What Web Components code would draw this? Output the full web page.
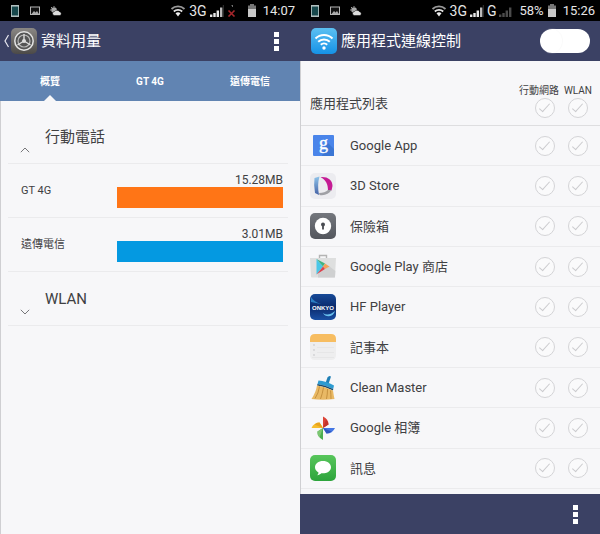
<!DOCTYPE html>
<html lang="zh-Hant">
<head>
<meta charset="utf-8">
<meta name="viewport" content="width=device-width, initial-scale=1">
<title>資料用量</title>
<style>
    body {
        margin: 0;
        min-height: 100vh;
        display: grid;
        grid-template-columns: 1fr 1fr;
        background: #f7f7f9;
        color: #404042;
        font-family: Roboto, "Noto Sans CJK TC", sans-serif;
        font-size: 13px;
        line-height: 20px;
    }
</style>
</head>
<body>
    <phone-screen>
        <status-bar slot="status">
            <sys-icon name="wifi"></sys-icon>
            <span>3G</span>
            <sys-icon name="signal"></sys-icon>
            <sys-icon name="nosim"></sys-icon>
            <sys-icon slot="power" name="battery"></sys-icon>
            <time slot="time">14:07</time>
        </status-bar>
        <title-bar slot="title" back menu>
            <app-icon slot="icon" name="settings"></app-icon>
            資料用量
        </title-bar>
        <tab-strip labels="概覽,GT 4G,遠傳電信"></tab-strip>
        <usage-group label="行動電話" opened>
            <usage-row label="GT 4G" value="15.28MB" style="--bar: #ff7516"></usage-row>
            <usage-row label="遠傳電信" value="3.01MB" style="--bar: #0499e1"></usage-row>
        </usage-group>
        <usage-group label="WLAN"></usage-group>
    </phone-screen>

    <phone-screen>
        <status-bar slot="status">
            <sys-icon name="wifi"></sys-icon>
            <span>3G</span>
            <sys-icon name="signal"></sys-icon>
            <span>G</span>
            <sys-icon name="weak"></sys-icon>
            <span slot="power">58%</span>
            <sys-icon slot="power" name="battery"></sys-icon>
            <time slot="time">15:26</time>
        </status-bar>
        <title-bar slot="title">
            <app-icon slot="icon" name="wlan"></app-icon>
            應用程式連線控制
            <toggle-switch slot="action" label="應用程式連線控制"></toggle-switch>
        </title-bar>
        <app-list></app-list>
        <bottom-bar slot="footer"></bottom-bar>
    </phone-screen>

<script>
    // Small monochrome glyphs for the status bar: [width, height, markup]
    const SYS_ICONS = {
        phone: [10, 14, '<rect x="1.5" y="1.5" width="7" height="11" fill="#17484c" stroke="#9fb3b3"/><path d="M1 2h8M1 12h8" stroke="#c4cccc"/>'],
        picture: [10, 10, '<rect x=".5" y="1" width="9" height="7.5" fill="#111" stroke="#b5b5b5"/><path d="M1.5 8l2.5-3 1.5 1.5L7 5l2 3z" fill="#aaa"/>'],
        weather: [12, 10, '<circle cx="4" cy="4" r="2.8" fill="#a8a8a8"/><path d="M1 1l1 1M4 0v1M0 4h1" stroke="#999"/><path d="M4.500 9.500a2 2 0 0 1 0-4 3 3 0 0 1 5 .2 2 2 0 0 1 .6 3.800z" fill="#ddd" stroke="#000" stroke-width=".5"/>'],
        wifi: [16, 12, '<g fill="none" stroke="#e2e2e2" stroke-width="1.800"><path d="M1.500 4a9.500 9.500 0 0 1 13 0" stroke="#999"/><path d="M3.800 6.500a6.200 6.200 0 0 1 8.400 0"/></g><path d="M5.500 8.300a4 4 0 0 1 5 0L8 11.500z" fill="#eee"/>'],
        signal: [14, 12, '<path d="M0 12v-2.500h2.400V12zM3.300 12V8h2.400v4zM6.600 12V5.500H9V12z" fill="#e8e8e8"/><path d="M10 12V2.500h2.400V12z" fill="#bbb"/><path d="M13.300 0v12" stroke="#444" stroke-width=".8"/>'],
        weak: [14, 12, '<path d="M0 12v-2.500h2.400V12zM3.300 12V8h2.400v4zM6.600 12V5.500H9V12zM10 12V2.500h2.400V12z" fill="#4b4b4b"/>'],
        nosim: [14, 12, '<path d="M1.500 5.500l6 6M7.500 5.500l-6 6" stroke="#a5262b" stroke-width="1.600"/><path d="M4 0h1.500v2" fill="none" stroke="#888" stroke-width=".8"/>'],
        battery: [10, 13, '<path d="M3 0h4v1.500h2V13H1V1.500h2z" fill="#777"/><path d="M1 5h8v8H1z" fill="#c9c9c9"/>'],
    };

    // Launcher icons, all drawn in a 26 x 26 box
    const APP_ICONS = {
        settings: `
            <defs><linearGradient id="g" x2="0" y2="1"><stop stop-color="#8a8784"/><stop offset="1" stop-color="#4c4a48"/></linearGradient></defs>
            <rect width="26" height="26" rx="5" fill="url(#g)"/>
            <circle cx="13" cy="13" r="9.200" fill="#555" stroke="#e4e4e4" stroke-width="1.500"/>
            <circle cx="13" cy="13" r="6" fill="none" stroke="#b8b8b8" stroke-width="1.200"/>
            <circle cx="13" cy="13" r="2" fill="#ddd"/>
            <path d="M13 13V6M13 13l-6.500 4M13 13l6.500 4" stroke="#ddd" stroke-width="1.400"/>`,
        wlan: `
            <defs><linearGradient id="g" x2="0" y2="1"><stop stop-color="#5cc0f2"/><stop offset="1" stop-color="#1592e6"/></linearGradient></defs>
            <rect width="26" height="26" rx="5" fill="url(#g)"/>
            <g fill="none" stroke="#fff" stroke-width="2"><path d="M4.500 10.500a12 12 0 0 1 17 0"/><path d="M7.200 13.800a8.200 8.200 0 0 1 11.600 0"/><path d="M9.800 16.800a4.600 4.600 0 0 1 6.400 0"/></g>
            <circle cx="13" cy="20" r="1.700" fill="#fff"/>`,
        google: `
            <rect x="3" y="2" width="21" height="21" rx="1" fill="#4a85ea"/>
            <path d="M17 9l7 7v7H12z" fill="#3b76d4"/>
            <text x="13.500" y="16" text-anchor="middle" font-family="Liberation Serif, serif" font-size="18" fill="#fff" stroke="#fff" stroke-width=".4">g</text>`,
        store: `
            <defs><linearGradient id="g" x2="0" y2="1"><stop stop-color="#8fc4ea"/><stop offset="1" stop-color="#4461a5"/></linearGradient></defs>
            <rect width="26" height="26" rx="5" fill="#ececf0"/>
            <path d="M4.500 5l5-1.500Q7 12 9 22l-4-2Q3.500 12 4.500 5z" fill="url(#g)"/>
            <path d="M10.500 4C18 3.500 22.500 7 22.500 13l-1 4.500h-3.500C18 11 16 7 10.500 4z" fill="#c51b94"/>
            <path d="M9 20c4 0 7-1 9-3h3.500C19 21 15 22.800 9.500 22z" fill="#9fa0a5"/>`,
        safe: `
            <defs><linearGradient id="g" x2="0" y2="1"><stop stop-color="#74777d"/><stop offset="1" stop-color="#53565d"/></linearGradient></defs>
            <rect width="26" height="26" rx="5" fill="url(#g)"/>
            <circle cx="13" cy="13" r="8.200" fill="#fff"/>
            <circle cx="13" cy="11.500" r="2" fill="#4a4c52"/><path d="M13 12v4.500" stroke="#4a4c52" stroke-width="1.800"/>`,
        play: `
            <path d="M9.500 4V1.500h7V4" fill="none" stroke="#b4b4b4" stroke-width="1.400"/>
            <path d="M0 4h26l-1 18.500q0 1-1 1H2q-1 0-1-1z" fill="#dedfdf"/><path d="M8 20L19 12l6.400 5-.4 6.500H8z" fill="#cfd0d1"/>
            <path d="M6.500 5v15.500l6.500-8z" fill="#49c7e8"/>
            <path d="M6.500 5l8.500 4.500-2 3z" fill="#41b383"/><path d="M15 9.500l4.500 3-4.500 2.500-2-2.500z" fill="#f2a25c"/>
            <path d="M6.500 20.500l6.500-8 2 2.500z" fill="#d9434f"/>`,
        onkyo: `
            <defs><linearGradient id="g" x2="0" y2="1"><stop stop-color="#174a98"/><stop offset=".5" stop-color="#0b2a6c"/><stop offset="1" stop-color="#1a50a4"/></linearGradient></defs>
            <rect width="26" height="26" rx="5" fill="url(#g)"/>
            <path d="M1 3Q4 8 11 10L1 8z" fill="#2b7fc4"/>
            <path d="M13 19q5 4 12-2-1.500 5-6 5.200Q15 22.500 13 19z" fill="#69c1ee"/>
            <text x="13" y="15.500" text-anchor="middle" font-family="Liberation Sans, sans-serif" font-weight="bold" font-size="6" fill="#fff">ONKYO</text>`,
        notes: `
            <path d="M0 7h26v14q0 5-5 5H5q-5 0-5-5z" fill="#eeeeef"/>
            <path d="M5 0h16q5 0 5 5v3H0V5q0-5 5-5z" fill="#f7bd61"/>
            <path d="M7 13.500h17M7 18.500h17M2 23.500h22" stroke="#e2e2e4" stroke-width=".7"/>
            <g fill="#cfd0d3"><circle cx="4" cy="11" r=".9"/><circle cx="4" cy="16" r=".9"/><circle cx="4" cy="21" r=".9"/></g>`,
        broom: `
            <path d="M15.500 8l2-5.500q1.500-2.500 3.500-1L18.500 9z" fill="#1f7fb5"/>
            <path d="M8.500 5.500Q16 6 24 10.500l-.8 3.500Q15 10 7.500 9z" fill="#2d9bd1"/><path d="M7.500 9Q15 10 23.200 14l-.2 1.500Q15 11.500 7 10.500z" fill="#184b70"/>
            <path d="M7 10.500q8 .8 16 5 .5 4 1.500 8.500-11.500 1.500-23 0Q6 17 7 10.500z" fill="#e9b965"/>
            <path d="M9.500 11.500q-1 7-4.500 12M13.500 12.500q-1 6-3 11.500M17.500 14q0 5-1 10M20.500 15.500q.5 4 .5 8.500" fill="none" stroke="#bd8735" stroke-width=".8"/>`,
        photos: `
            <path d="M13 13V1.500Q18.500 4 18.500 9.500z" fill="#dc4437"/><path d="M13 13l3-8.500Q18.500 7 18.500 9.500z" fill="#c2342c"/>
            <path d="M13 13h12q-2.500 5.500-8.500 5.500z" fill="#4476e4"/><path d="M13 13l8.500 3.500q-2 2-5 2z" fill="#3158bd"/>
            <path d="M13 13v12Q7 22 7.500 16.500z" fill="#4cae50"/><path d="M13 13l-3.500 9.500Q7 20 7.500 16.500z" fill="#7cc672"/>
            <path d="M13 13H1.500Q4 7.500 9.500 7.500z" fill="#f6bd2c"/><path d="M13 13L4.500 9.500q2-2 5-2z" fill="#e8a31d"/>`,
        messages: `
            <defs><linearGradient id="g" x2="0" y2="1"><stop stop-color="#58c65c"/><stop offset="1" stop-color="#2da43c"/></linearGradient></defs>
            <rect width="26" height="26" rx="5" fill="url(#g)"/>
            <path d="M13 6c-4.500 0-8 2.700-8 6.200 0 2.300 1.500 4.200 3.500 5.200 0 1-.6 2-1.500 2.800 2 0 3.200-.8 4.300-1.900 5.500.4 9.700-2.300 9.700-6.100C21 8.700 17.500 6 13 6z" fill="#fff"/>`,
    };

    const APPS = [
        ['google', 'Google App'],
        ['store', '3D Store'],
        ['safe', '保險箱'],
        ['play', 'Google Play 商店'],
        ['onkyo', 'HF Player'],
        ['notes', '記事本'],
        ['broom', 'Clean Master'],
        ['photos', 'Google 相簿'],
        ['messages', '訊息'],
    ];

    const KEBAB = `
        <button class="kebab" aria-label="選單"><i></i><i></i><i></i></button>`;
    const KEBAB_STYLE = `
        .kebab {
            display: grid;
            gap: 2px;
            padding: 0;
            border: 0;
            background: none;
            cursor: pointer;
        }
        .kebab i {
            width: 5px;
            height: 5px;
            background: white;
        }`;

    class SysIcon extends HTMLElement {
        constructor() {
            super();
            this.attachShadow({ mode: 'open' });
        }

        connectedCallback() {
            const [w, h, shape] = SYS_ICONS[this.getAttribute('name')];
            this.shadowRoot.innerHTML = `
            <style>
                :host { display: block; flex: none; }
                svg { display: block; }
            </style>
            <svg width="${w}" height="${h}" viewBox="0 0 ${w} ${h}" aria-hidden="true">${shape}</svg>`;
        }
    }

    class AppIcon extends HTMLElement {
        constructor() {
            super();
            this.attachShadow({ mode: 'open' });
        }

        connectedCallback() {
            this.shadowRoot.innerHTML = `
            <style>
                :host { display: block; flex: none; width: 26px; height: 26px; }
                svg { display: block; }
            </style>
            <svg width="26" height="26" viewBox="0 0 26 26" aria-hidden="true">${APP_ICONS[this.getAttribute('name')]}</svg>`;
        }
    }

    // The frame of one phone: status and title on top, an optional footer below
    class PhoneScreen extends HTMLElement {
        constructor() {
            super();
            this.attachShadow({ mode: 'open' });
            this.shadowRoot.innerHTML = `
            <style>
                :host {
                    display: flex;
                    flex-direction: column;
                    min-width: 0;
                }
                main {
                    flex: 1;
                    display: flex;
                    flex-direction: column;
                    border-left: 1px solid #cfcfd2;
                }
            </style>
            <slot name="status"></slot>
            <slot name="title"></slot>
            <main><slot></slot></main>
            <slot name="footer"></slot>`;
        }
    }

    class StatusBar extends HTMLElement {
        constructor() {
            super();
            this.attachShadow({ mode: 'open' });
            this.shadowRoot.innerHTML = `
            <style>
                :host {
                    display: flex;
                    align-items: center;
                    justify-content: space-between;
                    height: 21px;
                    padding: 0 5px 0 10px;
                    background: black;
                    color: #e6e6e6;
                }
                div {
                    display: flex;
                    align-items: center;
                    gap: 3px;
                }
                .notices { gap: 10px; }
                .state { gap: 6px; }
                .net { font-size: 14px; }
            </style>
            <div class="notices">
                <sys-icon name="phone"></sys-icon>
                <sys-icon name="picture"></sys-icon>
                <sys-icon name="weather"></sys-icon>
            </div>
            <div class="state">
                <div class="net"><slot></slot></div>
                <div><slot name="power"></slot></div>
                <slot name="time"></slot>
            </div>`;
        }
    }

    class TitleBar extends HTMLElement {
        constructor() {
            super();
            this.attachShadow({ mode: 'open' });
            this.shadowRoot.innerHTML = `
            <style>
                :host {
                    display: flex;
                    align-items: center;
                    height: 40px;
                    padding: 0 10px 0 3px;
                    background: #3b4164;
                    color: white;
                }
                .back {
                    width: 8px;
                    height: 16px;
                    padding: 0;
                    border: 0;
                    background: none;
                    visibility: hidden;
                }
                :host([back]) .back { visibility: visible; }
                .back svg { display: block; }
                h1 {
                    flex: 1;
                    margin: 0 0 0 4px;
                    font-size: 15px;
                    font-weight: 400;
                    white-space: nowrap;
                }
                ${KEBAB_STYLE}
                .kebab { margin-right: 11px; }
                :host(:not([menu])) .kebab { display: none; }
            </style>
            <button class="back" aria-label="返回">
                <svg width="8" height="16" viewBox="0 0 8 16"><path d="M5.500 2L2 8l3.500 6" fill="none" stroke="#e8e8f0" stroke-width="1.200"/></svg>
            </button>
            <slot name="icon"></slot>
            <h1><slot></slot></h1>
            <slot name="action"></slot>
            ${KEBAB}`;
        }
    }

    class ToggleSwitch extends HTMLElement {
        constructor() {
            super();
            this.attachShadow({ mode: 'open' });
            this.shadowRoot.innerHTML = `
            <style>
                :host { display: block; }
                input {
                    appearance: none;
                    display: flex;
                    width: 50px;
                    height: 24px;
                    margin: 0;
                    border-radius: 12px;
                    background: white;
                    cursor: pointer;
                }
                input::before {
                    content: "";
                    width: 22px;
                    border-radius: 50%;
                    box-shadow: 1px 0 1px #fafafa;
                }
                input:checked { background: #6ccb6f; }
                input:checked::before { margin-left: auto; background: white; }
            </style>
            <input type="checkbox" role="switch" aria-label="${this.getAttribute('label')}">`;
        }
    }

    class TabStrip extends HTMLElement {
        constructor() {
            super();
            this.attachShadow({ mode: 'open' });
            const tabs = this.getAttribute('labels').split(',');
            this.shadowRoot.innerHTML = `
            <style>
                :host {
                    display: grid;
                    grid-auto-flow: column;
                    grid-auto-columns: 1fr;
                    height: 40px;
                    margin-left: -1px;
                    background: #6184b2;
                }
                button {
                    position: relative;
                    padding: 2px 0 0;
                    border: 0;
                    background: none;
                    color: white;
                    font: bold 10px/20px Roboto, "Noto Sans CJK TC", sans-serif;
                    cursor: pointer;
                }
                /* the notch under the current tab */
                [aria-selected="true"]::after {
                    content: "";
                    position: absolute;
                    bottom: 0;
                    left: 50%;
                    border: 6px solid transparent;
                    border-top: 0;
                    border-bottom-color: #f7f7f9;
                    transform: translateX(-50%);
                }
            </style>
            ${tabs.map((tab, i) => `<button role="tab" aria-selected="${i === 0}">${tab}</button>`).join('')}`;
            this.setAttribute('role', 'tablist');

            this.shadowRoot.addEventListener('click', (event) => {
                if (event.target.localName !== 'button') return;
                for (const button of this.shadowRoot.querySelectorAll('button')) {
                    button.setAttribute('aria-selected', button === event.target);
                }
            });
        }
    }

    class UsageGroup extends HTMLElement {
        constructor() {
            super();
            this.attachShadow({ mode: 'open' });
            this.shadowRoot.innerHTML = `
            <style>
                :host {
                    display: block;
                    margin: 0 12px 0 7px;
                }
                :host(:first-of-type) { margin-top: 9px; }
                button {
                    display: flex;
                    align-items: center;
                    gap: 15px;
                    width: 100%;
                    height: 54px;
                    padding: 0 12px;
                    border: 0;
                    border-bottom: 1px solid #ebebed;
                    background: none;
                    color: inherit;
                    font: 15px/20px Roboto, "Noto Sans CJK TC", sans-serif;
                    cursor: pointer;
                }
                svg { margin-top: 26px; }
                :host([opened]) svg path { transform: scaleY(-1); transform-origin: center; }
                :host(:not([opened])) div { display: none; }
            </style>
            <button>
                <svg width="10" height="6" viewBox="0 0 10 6" aria-hidden="true"><path d="M.8.800L5 5l4.200-4.200" fill="none" stroke="#77777a"/></svg>
                <span>${this.getAttribute('label')}</span>
            </button>
            <div><slot></slot></div>`;

            const button = this.shadowRoot.querySelector('button');
            button.addEventListener('click', () => this.toggleAttribute('opened'));
        }
    }

    class UsageRow extends HTMLElement {
        constructor() {
            super();
            this.attachShadow({ mode: 'open' });
            this.shadowRoot.innerHTML = `
            <style>
                :host {
                    display: grid;
                    grid-template-columns: 11fr 19fr;
                    align-items: center;
                    height: 53px;
                    padding: 0 5px 0 13px;
                    border-bottom: 1px solid #ebebed;
                }
                .label { font-size: 11px; }
                .usage {
                    padding-bottom: 1px;
                    font-size: 12px;
                    line-height: 14px;
                    text-align: right;
                }
                .bar {
                    height: 21px;
                    background: var(--bar);
                }
            </style>
            <span class="label">${this.getAttribute('label')}</span>
            <div class="usage">${this.getAttribute('value')}<div class="bar"></div></div>`;
        }
    }

    class AppList extends HTMLElement {
        constructor() {
            super();
            this.attachShadow({ mode: 'open' });
            const ticks = (name) => ['行動網路', 'WLAN'].map((net) =>
                `<td><input type="checkbox" aria-label="${name} ${net}"></td>`).join('');
            const rows = APPS.map(([icon, name]) => `
                <tr>
                    <td><app-icon name="${icon}"></app-icon></td>
                    <th scope="row">${name}</th>
                    ${ticks(name)}
                    <td></td>
                </tr>`).join('');
            this.shadowRoot.innerHTML = `
            <style>
                :host {
                    flex: 1;
                    display: grid;
                    padding-bottom: 5px;
                }
                table {
                    width: 100%;
                    height: 100%;
                    border-collapse: separate;
                    border-spacing: 0;
                    table-layout: fixed;
                }
                .icon { width: 49px; }
                .mobile { width: 41px; }
                .wlan { width: 33px; }
                .edge { width: 8px; }
                th, td {
                    padding: 0;
                    border-bottom: 1px solid #ebebed;
                    font-weight: 400;
                    text-align: left;
                    white-space: nowrap;
                }
                tbody tr { height: 40px; }
                tbody th { padding-top: 1px; }
                thead tr { height: 65px; }
                thead th, thead td { border-color: #dedee0; }
                thead th[colspan] { padding: 21px 0 0 9px; }
                app-icon { margin-left: 9px; }
                .net {
                    font-size: 10px;
                    line-height: 14px;
                    text-align: right;
                    vertical-align: bottom;
                }
                label { display: block; }
                input {
                    appearance: none;
                    display: block;
                    width: 20px;
                    height: 20px;
                    margin: 0 4px 0 auto;
                    border: 1px solid #d4d4d7;
                    border-radius: 50%;
                    background: #fafafb;
                    cursor: pointer;
                }
                thead input { margin-bottom: 7px; }
                /* the tick itself: two sides of a turned box */
                input::before {
                    content: "";
                    display: block;
                    width: 4px;
                    height: 10px;
                    margin: 2px 6px;
                    border: solid #cbcbce;
                    border-width: 0 1px 1px 0;
                    transform: rotate(42deg);
                }
                input:checked { background: #4a90d9; }
            </style>
            <table>
                <colgroup><col class="icon"><col><col class="mobile"><col class="wlan"><col class="edge"></colgroup>
                <thead>
                    <tr>
                        <th colspan="2">應用程式列表</th>
                        <th class="net"><label for="all-mobile">行動網路</label><input type="checkbox" id="all-mobile"></th>
                        <th class="net"><label for="all-wlan">WLAN</label><input type="checkbox" id="all-wlan"></th>
                        <td></td>
                    </tr>
                </thead>
                <tbody>${rows}</tbody>
            </table>`;

            // The ticks in the head set the whole column
            this.shadowRoot.querySelectorAll('thead input').forEach((all, column) => {
                all.addEventListener('change', () => {
                    for (const row of this.shadowRoot.querySelectorAll('tbody tr')) {
                        row.querySelectorAll('input')[column].checked = all.checked;
                    }
                });
            });
        }
    }

    class BottomBar extends HTMLElement {
        constructor() {
            super();
            this.attachShadow({ mode: 'open' });
            this.shadowRoot.innerHTML = `
            <style>
                :host {
                    display: flex;
                    align-items: center;
                    justify-content: flex-end;
                    height: 40px;
                    padding: 0 22px;
                    background: #3b4164;
                }
                ${KEBAB_STYLE}
            </style>
            ${KEBAB}`;
        }
    }

    customElements.define('sys-icon', SysIcon);
    customElements.define('app-icon', AppIcon);
    customElements.define('phone-screen', PhoneScreen);
    customElements.define('status-bar', StatusBar);
    customElements.define('title-bar', TitleBar);
    customElements.define('toggle-switch', ToggleSwitch);
    customElements.define('tab-strip', TabStrip);
    customElements.define('usage-group', UsageGroup);
    customElements.define('usage-row', UsageRow);
    customElements.define('app-list', AppList);
    customElements.define('bottom-bar', BottomBar);
</script>
</body>
</html>
